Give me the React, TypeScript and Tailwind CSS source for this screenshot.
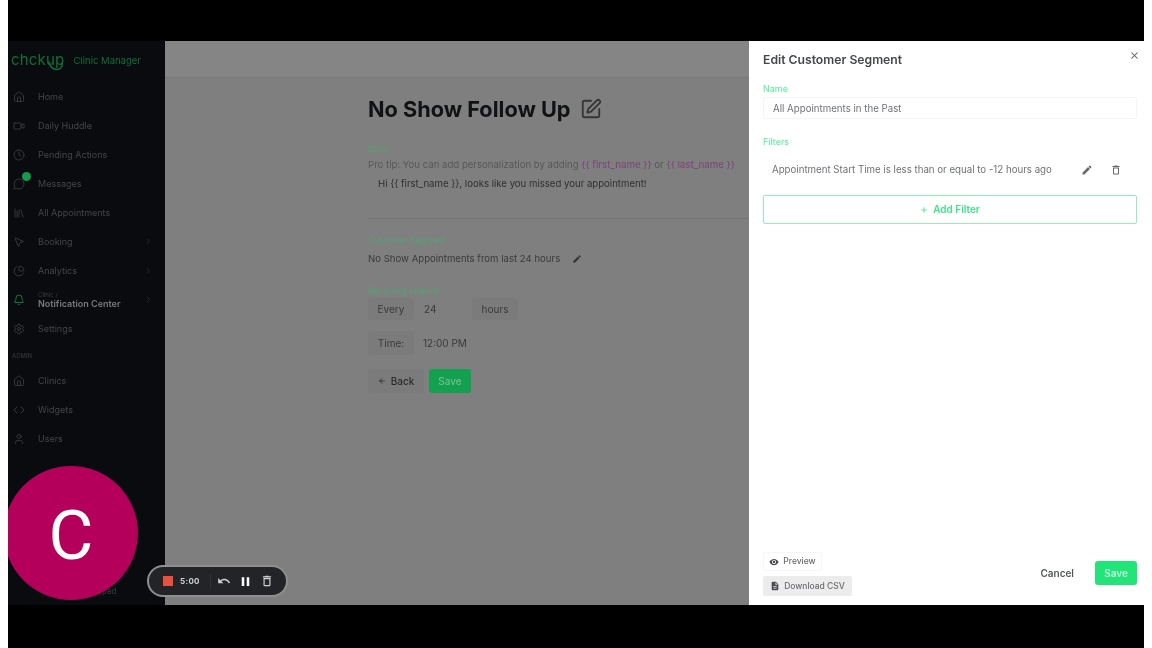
import { ArrowLeft, Bell, ChevronRight, Clock, Code, House, Library, MessageCircle, MousePointer2, PieChart, Plus, Settings, SquarePen, User, Video, X } from 'lucide-react';
import { MdDeleteOutline, MdEdit, MdDescription, MdPause, MdUndo, MdVisibility } from 'react-icons/md';

const font = { fontFamily: 'Inter, "Liberation Sans", sans-serif' };

const mainItems = [
  { label: 'Home', icon: House },
  { label: 'Daily Huddle', icon: Video },
  { label: 'Pending Actions', icon: Clock },
  { label: 'Messages', icon: MessageCircle, badge: true },
  { label: 'All Appointments', icon: Library },
  { label: 'Booking', icon: MousePointer2, chevron: true },
  { label: 'Analytics', icon: PieChart, chevron: true },
];

const adminItems = [
  { label: 'Clinics', icon: House },
  { label: 'Widgets', icon: Code },
  { label: 'Users', icon: User },
];

function NavRow({ label, icon: Icon, badge, chevron }: { label: string; icon: typeof House; badge?: boolean; chevron?: boolean }) {
  return (
    <div className="relative flex h-[29px] items-center pl-[2px] pr-[12px] text-[9px] text-[#434548]">
      <Icon className="size-[12px] text-[#3c3e41]" strokeWidth={1.7} />
      <span className="ml-[13px] flex-1">{label}</span>
      {chevron && <ChevronRight className="size-[9px] text-[#323437]" />}
      {badge && <span className="absolute left-[11px] top-[3px] size-[9px] rounded-full bg-[#149a4c]" />}
    </div>
  );
}

function Sidebar() {
  return (
    <aside className="flex w-[157px] shrink-0 flex-col bg-[#0a0b0f] pl-[3px]">
      <div className="relative flex h-[41px] items-center">
        <span className="pb-[4px] text-[15px] leading-none tracking-[0.2px] text-[#0d7038]">chckup</span>
        <svg className="absolute left-[37px] top-[16px] h-[14px] w-[16px]" viewBox="0 0 16 14" fill="none" stroke="#0d7038" strokeWidth="1.3" strokeLinecap="round">
          <path d="M1 5c1 5 4 7.5 8 7.5 3.5 0 5.5-3 5.5-7" />
        </svg>
        <span className="ml-[9px] text-[9.5px] text-[#0d7038]">Clinic Manager</span>
      </div>
      <div className="flex flex-col">
        {mainItems.map((item) => (
          <NavRow key={item.label} {...item} />
        ))}
        <div className="flex h-[29px] items-center pl-[2px] pr-[12px]">
          <Bell className="size-[12px] text-[#128443]" strokeWidth={1.8} />
          <div className="ml-[13px] flex flex-1 flex-col">
            <span className="text-[6px] leading-[7px] text-[#3a3d40]">Clinic /</span>
            <span className="text-[9px] font-semibold leading-[11px] text-[#77797b]">Notification Center</span>
          </div>
          <ChevronRight className="size-[9px] text-[#323437]" />
        </div>
        <NavRow label="Settings" icon={Settings} />
      </div>
      <p className="mt-[8px] h-[15px] pl-[1px] text-[6px] leading-[10px] text-[#3a3d40]">ADMIN</p>
      <div className="flex flex-col">
        {adminItems.map((item) => (
          <NavRow key={item.label} {...item} />
        ))}
      </div>
      <p className="mt-auto pb-[9px] pl-[73px] text-[8px] leading-[10px] text-[#3a3d40]">Notepad</p>
    </aside>
  );
}

function Content() {
  return (
    <main className="flex-1 bg-[#7f7f7f]">
      <div className="h-[37px] border-b border-[#7a7a7a] bg-[#858585]" />
      <div className="pl-[203px] pt-[16px]">
        <div className="flex items-center gap-[9px]">
          <h1 className="text-[21.7px] font-bold leading-[30px] text-[#111214]">No Show Follow Up</h1>
          <SquarePen className="size-[22px] text-[#343537]" strokeWidth={2} />
        </div>
        <p className="mt-[19px] text-[8.5px] leading-[12px] text-[#55a272]">Body</p>
        <p className="mt-[2px] whitespace-nowrap text-[9.6px] leading-[15px] text-[#575757]">
          Pro tip: You can add personalization by adding <span className="font-medium text-[#7d4a7c]">{'{{ first_name }}'}</span> or <span className="font-medium text-[#7d4a7c]">{'{{ last_name }}'}</span>
        </p>
        <div className="h-[47px] border-b border-[#737373] pl-[10px] pt-[4px] text-[9.6px] leading-[15px] text-[#2f2f2f]">
          Hi {'{{ first_name }}'}, looks like you missed your appointment!
        </div>
        <p className="mt-[15px] text-[8.5px] leading-[12px] text-[#55a272]">Customer Segment</p>
        <div className="mt-[5px] flex items-center gap-[12px] text-[9.6px] leading-[15px] text-[#3a3a3a]">
          No Show Appointments from last 24 hours
          <MdEdit className="size-[10px] text-[#343537]" />
        </div>
        <p className="mt-[19px] text-[8.5px] leading-[12px] text-[#55a272]">Recurring Interval</p>
        <div className="mt-[1px] flex items-center text-[10px] text-[#3a3a3a]">
          <span className="flex h-[22px] w-[46px] items-center justify-center rounded-[3px] bg-[#7b7b7b]">Every</span>
          <span className="ml-[10px] w-[48px]">24</span>
          <span className="flex h-[22px] w-[46px] items-center justify-center rounded-[3px] bg-[#7b7b7b]">hours</span>
        </div>
        <div className="mt-[11px] flex items-center text-[10px] text-[#3a3a3a]">
          <span className="flex h-[24px] w-[46px] items-center justify-center rounded-[3px] bg-[#7b7b7b]">Time:</span>
          <span className="ml-[9px]">12:00 PM</span>
        </div>
        <div className="mt-[14px] flex items-center gap-[5px] text-[10px] font-medium">
          <span className="flex h-[24px] w-[56px] items-center justify-center gap-[5px] rounded-[3px] bg-[#7b7b7b] text-[#2b2c2e]">
            <ArrowLeft className="size-[8px]" strokeWidth={2.5} />
            Back
          </span>
          <span className="flex h-[24px] w-[42px] items-center justify-center rounded-[3px] bg-[#13a04f] text-[#6fbf8f]">Save</span>
        </div>
      </div>
    </main>
  );
}

function Drawer() {
  return (
    <section className="flex w-[395px] shrink-0 flex-col bg-white px-[14px]">
      <div className="relative pt-[11px]">
        <h2 className="text-[12.2px] font-semibold leading-[15px] text-[#45474b]">Edit Customer Segment</h2>
        <X className="absolute right-[-10px] top-[9px] size-[11px] text-[#55575a]" strokeWidth={2.2} />
      </div>
      <label className="mt-[17px] text-[9px] leading-[10px] text-[#53ef9a]">Name</label>
      <div className="mt-[3px] h-[22px] w-[374px] rounded-[2px] border border-[#f5f5f5] pl-[9px] text-[9.7px] leading-[22px] text-[#707276]">
        All Appointments in the Past
      </div>
      <label className="mt-[18px] text-[9px] leading-[10px] text-[#53ef9a]">Filters</label>
      <div className="mt-[6px] flex h-[34px] w-[374px] items-center pl-[9px] text-[9.7px] text-[#6f7175]">
        <span className="flex-1">Appointment Start Time is less than or equal to -12 hours ago</span>
        <MdEdit className="mr-[17px] size-[12px] text-[#66686c]" />
        <MdDeleteOutline className="mr-[15px] size-[12px] text-[#66686c]" />
      </div>
      <div className="mt-[8px] flex h-[29px] w-[374px] items-center justify-center gap-[5px] rounded-[2px] border border-[#8ff0bb] text-[10px] font-semibold text-[#3de589]">
        <Plus className="size-[8px]" strokeWidth={2.5} />
        Add Filter
      </div>
      <div className="mt-auto flex items-end justify-between pb-[9px]">
        <div className="flex flex-col items-start gap-[5px] text-[8.5px] font-medium text-[#6b6d70]">
          <span className="flex h-[19px] w-[59px] items-center justify-center gap-[4px] rounded-[2px] border border-[#f6f6f6]">
            <MdVisibility className="size-[10px] text-[#4a4c50]" />
            Preview
          </span>
          <span className="flex h-[20px] w-[89px] items-center justify-center gap-[4px] rounded-[2px] bg-[#ececec]">
            <MdDescription className="size-[10px] text-[#4a4c50]" />
            Download CSV
          </span>
        </div>
        <div className="mb-[11px] mr-[-7px] flex items-center gap-[21px] text-[10px] font-semibold">
          <span className="text-[#55575a]">Cancel</span>
          <span className="flex h-[24px] w-[42px] items-center justify-center rounded-[3px] bg-[#22e57a] text-[#c4f7da]">Save</span>
        </div>
      </div>
    </section>
  );
}

function Recorder() {
  return (
    <div className="absolute left-[139px] top-[524px] flex h-[32px] w-[141px] items-center rounded-full border-2 border-[#8f8f8f] bg-[#232427] pl-[14px] text-white">
      <span className="size-[10px] bg-[#e8513f]" />
      <span className="ml-[7px] text-[8px] font-bold tracking-[0.3px] text-[#d0d0d0]">5:00</span>
      <span className="ml-[10px] h-[14px] w-px bg-[#333437]" />
      <MdUndo className="ml-[6px] size-[14px] text-[#d0d0d0]" />
      <MdPause className="ml-[7px] size-[15px] text-white" />
      <MdDeleteOutline className="ml-[7px] size-[14px] text-[#d0d0d0]" />
    </div>
  );
}

export default function App() {
  return (
    <div className="flex h-[648px] w-[1152px] overflow-hidden bg-white" style={font}>
      <div className="ml-[8px] flex w-[1136px] flex-col bg-black py-[41px] pb-[43px]">
        <div className="relative flex h-[564px] blur-[0.4px]">
          <Sidebar />
          <Content />
          <Drawer />
          <div className="absolute left-0 top-[425px] h-[134px] w-[130px] overflow-hidden">
            <div className="ml-[-4px] flex h-[134px] w-[134px] items-center justify-center rounded-full bg-[#b5005b] pt-[4px] text-[69px] leading-none text-white" style={{ fontFamily: 'Roboto, sans-serif' }}>C</div>
          </div>
          <Recorder />
        </div>
      </div>
    </div>
  );
}
